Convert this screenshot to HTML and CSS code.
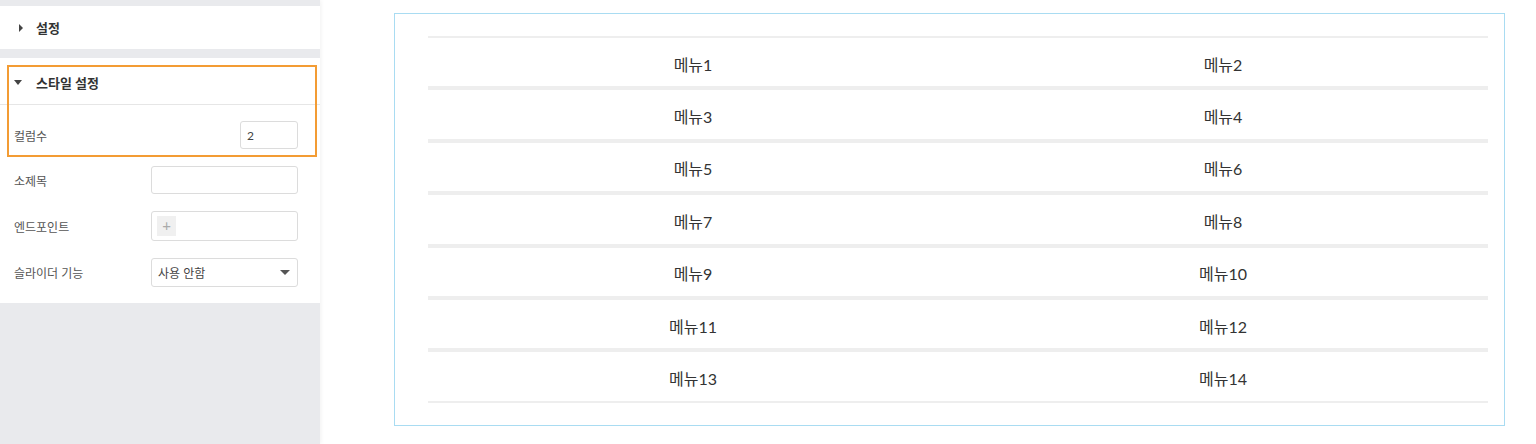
FILE: index.html
```html
<!DOCTYPE html>
<html lang="ko">
<head>
  <meta charset="UTF-8" />
  <title>메뉴 설정</title>
  <link rel="stylesheet" href="styles.css">
</head>
<body>
  <div class="layout">
    <aside class="sidebar">
      <section class="panel panel-closed">
        <div class="panel-head"><span class="caret caret-right"></span>설정</div>
      </section>

      <section class="panel panel-open">
        <div class="highlight"></div>
        <div class="panel-head head-line"><span class="caret caret-down"></span>스타일 설정</div>
        <div class="field">
          <label>컬럼수</label>
          <input class="input input-small" type="text" value="2">
        </div>
        <div class="field">
          <label>소제목</label>
          <input class="input" type="text">
        </div>
        <div class="field">
          <label>엔드포인트</label>
          <div class="input input-tall"><span class="add-btn">+</span></div>
        </div>
        <div class="field">
          <label>슬라이더 기능</label>
          <div class="input select">사용 안함<span class="select-caret"></span></div>
        </div>
      </section>
    </aside>

    <main class="preview">
      <div class="frame">
        <div class="menu-list" id="menuList"></div>
      </div>
    </main>
  </div>

  <script>
    // 메뉴 목록 (2컬럼)
    const list = document.getElementById('menuList');
    for (let i = 1; i <= 14; i += 2) {
      const row = document.createElement('div');
      row.className = 'menu-row';
      row.innerHTML = `<div class="menu-cell">메뉴${i}</div><div class="menu-cell">메뉴${i + 1}</div>`;
      list.appendChild(row);
    }
  </script>
</body>
</html>
```

FILE: styles.css
```css
* { box-sizing: border-box; }
body {
  margin: 0;
  font-family: Lato, "Noto Sans CJK KR", sans-serif;
  background: #fff;
  color: #333;
}
.layout { display: flex; height: 444px; }

.sidebar {
  width: 320px;
  flex-shrink: 0;
  background: #e9eaed;
  padding-top: 6px;
  box-shadow: 1px 0 4px rgba(0,0,0,0.06);
}
.panel { background: #fff; }
.panel-closed { height: 43px; margin-bottom: 9px; }
.panel-open { position: relative; padding-bottom: 1px; }
.panel-head {
  display: flex;
  align-items: center;
  height: 43px;
  padding-left: 14px;
  font-size: 13px;
  font-weight: bold;
  color: #333;
}
.panel-open .panel-head { height: 47px; padding-top: 3px; }
.head-line { border-bottom: 1px solid #e6e6e6; margin-bottom: 16px; }
.caret { display: inline-block; width: 0; height: 0; margin-right: 14px; }
.caret-right {
  margin-left: 5px;
  margin-right: 13px;
  border-top: 4px solid transparent;
  border-bottom: 4px solid transparent;
  border-left: 4px solid #444;
}
.caret-down {
  border-left: 4px solid transparent;
  border-right: 4px solid transparent;
  border-top: 5px solid #444;
}
.highlight {
  position: absolute;
  left: 7px;
  top: 7px;
  width: 310px;
  height: 92px;
  border: 2px solid #f39c34;
  pointer-events: none;
}

.field {
  display: grid;
  grid-template-columns: 137px minmax(0, 1fr);
  align-items: center;
  padding: 0 22px 0 14px;
  margin-bottom: 17px;
  font-size: 12px;
  color: #555;
}
.field:last-child { margin-bottom: 15px; }
.field label { white-space: nowrap; }
.input {
  width: 100%;
  min-width: 0;
  height: 28px;
  border: 1px solid #dcdcdc;
  border-radius: 3px;
  padding: 0 6px;
  font-family: inherit;
  font-size: 12px;
  color: #444;
  background: #fff;
  outline: none;
}
.input-small { width: 58px; justify-self: end; }
.input-tall { height: 30px; display: flex; align-items: center; padding: 0 5px; }
.add-btn {
  width: 19px;
  height: 20px;
  background: #f0f0f0;
  color: #aaa;
  font-size: 15px;
  line-height: 19px;
  text-align: center;
}
.select {
  height: 29px;
  display: flex;
  align-items: center;
  justify-content: space-between;
  padding-right: 7px;
  color: #444;
}
.select-caret {
  width: 0;
  height: 0;
  border-left: 5px solid transparent;
  border-right: 5px solid transparent;
  border-top: 5px solid #555;
}

.preview { flex: 1; padding: 13px 31px 0 74px; }
.frame {
  height: 413px;
  border: 1px solid #a9dcf2;
  padding: 22px 16px 0 33px;
}
.menu-row {
  display: grid;
  grid-template-columns: 1fr 1fr;
  height: 52.4px;
  border-top: 2px solid #eee;
  border-bottom: 2px solid #eee;
}
.menu-cell {
  display: flex;
  align-items: center;
  justify-content: center;
  padding-top: 3px;
  font-size: 16px;
  color: #333;
}
```
